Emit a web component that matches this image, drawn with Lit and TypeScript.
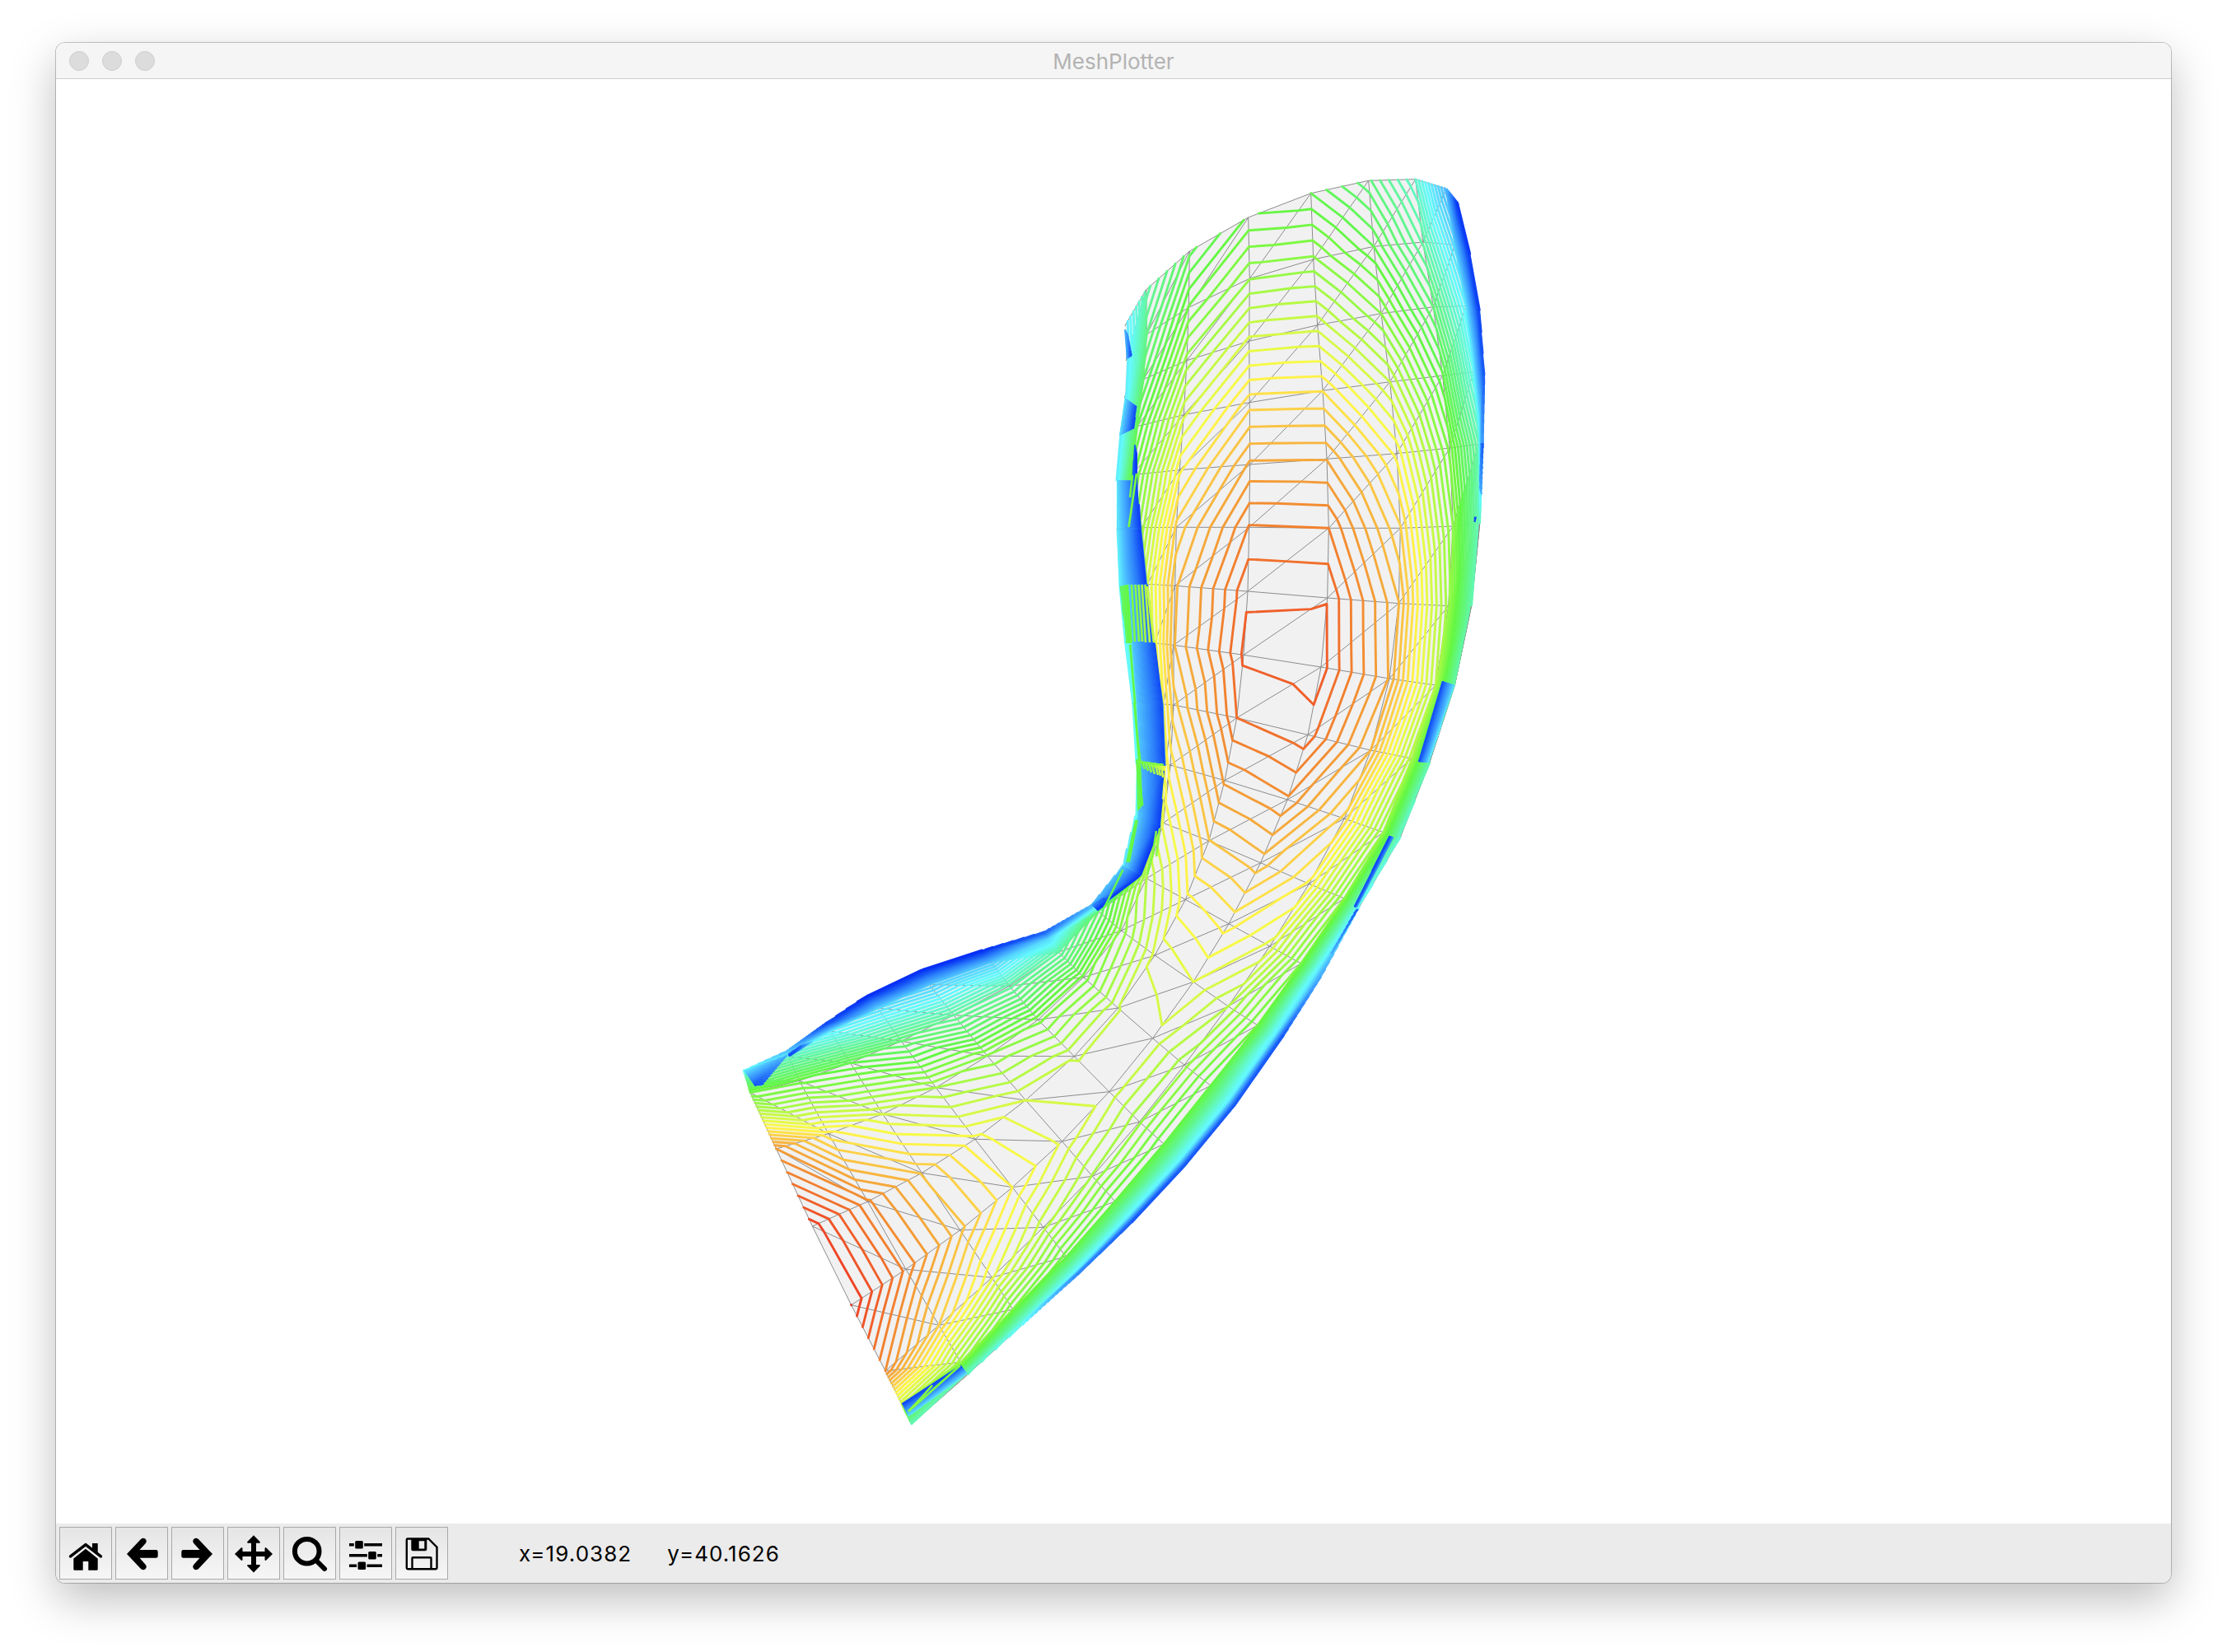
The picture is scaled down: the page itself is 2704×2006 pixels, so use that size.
import { LitElement, html, css, svg } from "lit";
import { customElement, property } from "lit/decorators.js";

type V = [number, number, number];

// Mesh vertices: each row is a ring across the tube, [x, y, contour value].
const ROWS: V[][] = [
  [[1365.7,396,39],[1365.7,396,39],[1391.7,351.7,31.5],[1444.3,305,26.3],[1515.7,264,23.8],[1591.7,234.7,25],[1661.7,219.3,28.7],[1718.7,217.7,34],[1756,229.3,43.5],[1770.7,247.7,60]],
  [[1367.3,438,39],[1367.3,438,39],[1392.3,406,29],[1443.3,373.3,22.9],[1517.3,338.3,20.05],[1594.7,315,20.8],[1668,299.3,25],[1727.7,294,31.2],[1766.7,297.3,40.5],[1784.7,308.3,59]],
  [[1365.3,483,39],[1365.3,483,39],[1388.3,460.7,27],[1441,437.7,19.6],[1516.7,414.3,15.7],[1599.7,394.7,16.4],[1677,380.7,21],[1740.3,372.7,28],[1780,371.7,38],[1796.3,376.7,58]],
  [[1359.3,528,39],[1359.3,528,39],[1380.7,517.7,25],[1437.3,503.7,16.2],[1517.3,488.7,11.45],[1606,474.3,12.05],[1687.7,463.7,17],[1751.7,456,24.8],[1789.3,451.7,36],[1802,455,55]],
  [[1356,583,38],[1356,583,38],[1374.3,576.7,23.5],[1432.3,570.7,13.2],[1517.7,564,7.77],[1611,557.3,8.05],[1696,550.7,13.3],[1760.3,544,22.3],[1795.7,539.3,32],[1800.3,537,48]],
  [[1356,643.3,38],[1356,643.3,38],[1386,640.7,19.5],[1428.3,640.3,10.7],[1516.7,640.3,4.9],[1613.3,641.3,5],[1700.3,641.3,10.9],[1764.3,639,21],[1796.7,635,33],[1796.7,635,33]],
  [[1360,713,37],[1360,713,37],[1393.3,709.3,16],[1426.7,711.3,9.2],[1515,718,3.1],[1611.7,726,3.05],[1698.3,732.7,8.95],[1758.7,735.7,19.5],[1786.7,735,32],[1786.7,735,32]],
  [[1365,780,38],[1365,780,38],[1402,781,14.5],[1425,783.3,9.1],[1510,795.3,2.8],[1604,810,2.5],[1687,824,8.1],[1743.3,832,18],[1766.3,832,31.5],[1766.3,832,31.5]],
  [[1374.3,855,38],[1374.3,855,38],[1412.7,855,13],[1425,856,10.4],[1501.7,871.7,4],[1588,892.3,3.4],[1664.3,911,9],[1714,921,18.5],[1735.5,926.7,32],[1735.5,926.7,32]],
  [[1380,926.7,37],[1380,926.7,37],[1415,928,13.5],[1421,929,12.5],[1487.1,947.7,6.8],[1563.2,971,6.15],[1632.3,994,11.3],[1679.7,1010.7,20],[1700,1017,34],[1700,1017,34]],
  [[1378.4,991.7,37],[1378.4,991.7,37],[1409,999,16],[1412.4,999.3,14.8],[1467.8,1021,10.05],[1530.6,1047.7,9.47],[1589.5,1073.3,13.2],[1632.3,1091,21],[1650,1101.7,37],[1650,1101.7,37]],
  [[1363,1051.7,40],[1363,1051.7,40],[1386,1063,20],[1392,1066.7,18],[1439.4,1092.3,13.3],[1492,1121.7,12.6],[1541.8,1149,15.3],[1579.7,1170,22],[1599,1183,39],[1603.3,1186.7,46]],
  [[1325.4,1099.3,44],[1325.4,1099.3,44],[1333.5,1106.7,27],[1361.5,1130,20.6],[1402.2,1160,15.7],[1448.9,1192.3,15],[1491.3,1222,18],[1527,1245,23],[1548,1260,39],[1553.5,1265,56]],
  [[1268.2,1131.7,54],[1271.5,1139,41],[1285.4,1156,31],[1315.7,1186.7,22.6],[1357.5,1224,17.05],[1399.6,1260.7,16.3],[1438,1293.3,19.6],[1470,1318.3,24],[1494,1336.500,38.5],[1500,1341.5,56]],
  [[1192.5,1154,60],[1203.2,1168.3,42],[1225.7,1197.3,31.5],[1260.4,1238.3,22.4],[1304.3,1282.7,17.1],[1346.8,1325.7,16.35],[1383.6,1362.3,19.8],[1413.3,1389.3,24],[1434,1410,38.5],[1439.3,1415,56]],
  [[1117.5,1177.3,61],[1128.2,1195.7,42],[1157.9,1232.7,31],[1198.9,1282.3,20.9],[1245.4,1336,16],[1289.6,1386,15.15],[1326.4,1428.3,19.1],[1354,1459,24],[1370,1479.500,38.5],[1374.3,1484,55]],
  [[1053.9,1207.7,61],[1065.7,1224.3,40],[1094.3,1264.3,28],[1136.4,1320.7,19],[1183.9,1383.3,13.7],[1229.3,1441.7,13],[1266.8,1490.3,17.6],[1294.3,1525.7,23.5],[1307,1545.500,38.5],[1308.5,1547.5,50]],
  [[1002.5,1242.7,57],[1007.5,1252,38],[1032.5,1290.7,25],[1071.8,1352.7,16],[1119.3,1424.3,10.1],[1165.7,1493.7,9.7],[1204.3,1551.3,14.8],[1230,1590,22],[1241,1606.7,35.5],[1242,1608,37]],
  [[956,1276,43],[957.8,1283,33],[970.4,1312.3,23.5],[1006,1376.7,12.6],[1053.6,1459,5.8],[1100,1541.3,5.3],[1140,1609.3,11],[1166.4,1654,19.5],[1174.6,1667.3,32.5],[1175.5,1668.5,33]],
  [[903.2,1300,37],[907,1312,29],[911,1326.7,23],[942.5,1395,7],[986.4,1489,0.4],[1033.6,1584.7,0],[1075,1664.7,6],[1094.6,1704,16.5],[1106.8,1728.7,32],[1107,1729,32]],
];

// Fragments of hidden layers showing through at the fold: a, b, c, d in ring order.
const PATCHES: [V, V, V, V][] = [
  // upper left edge
  [[1366,400,45],[1369,405,48],[1374,432,57],[1368,436,44]],
  [[1367,484,40],[1379.5,493,56],[1377,520,58],[1360,528.5,40]],
  [[1378,540,54],[1380.5,552,60],[1381,600,60],[1375,578,52]],
  [[1357,583.5,40],[1380,583.5,57],[1386,641,59],[1356.5,643,38]],
  [[1356.5,643,38],[1386,641,59],[1393,709.5,59],[1360,713,38]],
  [[1359.5,712,28],[1371,709.5,23],[1376,781,22],[1368,781,26]],
  [[1371,709.5,42],[1393,709.5,55],[1402,781,56],[1376,781,42]],
  [[1375,780,42],[1402,781,57],[1412.7,855,58],[1381,855,42]],
  [[1371,783,25],[1373.5,783,23],[1378.5,855,24],[1377,855,25]],
  [[1381,855,42],[1412.7,855,58],[1415.5,930,58],[1384,926,42]],
  [[1376,852,25],[1379,855,23],[1385,926,24],[1382,926,25]],
  [[1382,926,41],[1413,936,57],[1409,1005,59],[1382,998,42]],
  [[1380,922,25],[1385,922,23],[1387.5,978,24],[1381,985,26]],
  [[1381,994,41],[1408.5,1002,59],[1386,1063,60],[1366,1052,40]],
  [[1378,996,26],[1381,996,24],[1371,1047,24],[1367,1047,26]],
  [[1364,1052,42],[1386,1063,60],[1340,1098,60],[1326,1098,44]],
  [[1340,1090,54],[1346,1094,58],[1333,1106,60],[1326,1099,48]],
  // lower left end
  [[904,1300.5,39],[956,1281.5,45],[925,1318.5,57],[916,1318,56]],
  [[957,1280,52],[972,1270,54],[987,1264.5,40],[958,1283,58]],
  // right edge
  [[1798.5,538,50],[1801,538,56],[1799,600,46],[1796.5,590,46]],
  [[1789.8,628.5,56],[1792.8,628.5,56],[1791.5,634,57],[1789.5,634,57]],
  [[1751,827,57],[1765.5,831.7,39],[1735,926,37],[1722,925,57]],
  [[1687,1015,58],[1691.5,1016.5,47],[1647,1102,44],[1644.5,1101,56]],
  [[1647,1104,56],[1649,1104,54],[1617,1158,44],[1616,1158,46]],
  // bottom end
  [[1095,1704,58],[1166.5,1657.5,58],[1174,1667.5,39],[1103,1720,38]],
];

// Loose strands lying over the patches: polyline and level.
const STRANDS: [number, [number, number][]][] = [
  [22, [[1380,575],[1370.5,640]]],
  [23, [[1375,577],[1372,604]]],
  [22, [[1374,710],[1378,779]]], [21, [[1378.5,710],[1383,779]]], [20, [[1382.5,710],[1387,779]]],
  [19, [[1386.5,710],[1391,780]]], [18, [[1390.5,710],[1396,780]]], [17, [[1393,712],[1401,780]]],
  [23, [[1382,924],[1385,932]]], [22, [[1386,924],[1390,934]]], [21, [[1390,925],[1394,936]]], [20, [[1394,925],[1398,938]]],
  [19, [[1398,926],[1402,940]]], [18, [[1402,926],[1406,941]]], [17, [[1406,927],[1409,942]]], [16, [[1410,927],[1412,944]]],
  [22, [[1383,925],[1413,929]]],
  [25, [[1363.5,1056],[1341,1102]]],
  [22, [[1404,1009],[1400,1035],[1393,1062]]], [21, [[1408,1006],[1404,1040]]],
  [22, [[1103.5,1713],[1112,1706],[1140,1681],[1166,1658]]],
  [21, [[1103,1714],[1118,1698],[1132,1682]]],
];

const STOPS: [number, number, number, number][] = [
  [0,238,58,36],[3,240,95,42],[5,242,128,46],[8,245,168,58],[11,253,208,70],[13.5,255,250,70],[17,198,250,68],
  [20,150,250,68],[24,100,247,66],[30,98,246,145],[37,100,250,253],[43.5,76,188,255],[51,45,128,250],[56,20,82,245],[60,8,48,245],
];

function levelColor(n: number): string {
  const v = Math.max(0, Math.min(60, n));
  let i = 1;
  while (i < STOPS.length - 1 && STOPS[i][0] < v) i++;
  const a = STOPS[i - 1], b = STOPS[i];
  const t = (v - a[0]) / (b[0] - a[0]);
  const c = [1, 2, 3].map((k) => Math.round(a[k] + (b[k] - a[k]) * t));
  return `rgb(${c.join(",")})`;
}

const f = (n: number) => n.toFixed(1);

function contour(tri: V[], out: Map<number, string[]>) {
  const vs = tri.map((p) => p[2]);
  const lo = Math.ceil(Math.min(...vs)), hi = Math.floor(Math.max(...vs));
  for (let n = lo; n <= hi; n++) {
    const level = n + 0.001;
    const hits: string[] = [];
    for (let i = 0; i < 3; i++) {
      const a = tri[i], b = tri[(i + 1) % 3];
      if (a[2] < level !== b[2] < level) {
        const t = (level - a[2]) / (b[2] - a[2]);
        hits.push(`${f(a[0] + (b[0] - a[0]) * t)} ${f(a[1] + (b[1] - a[1]) * t)}`);
      }
    }
    if (hits.length === 2) {
      if (!out.has(n)) out.set(n, []);
      out.get(n)!.push(`M${hits[0]}L${hits[1]}`);
    }
  }
}

function paths(levels: Map<number, string[]>) {
  return [...levels.entries()]
    .sort((a, b) => a[0] - b[0])
    .map(([n, d]) => svg`<path d=${d.join("")} stroke=${levelColor(n)}></path>`);
}

@customElement("mesh-canvas")
class MeshCanvas extends LitElement {
  static styles = css`
    :host { display: block; }
    .plot { display: block; width: 100%; height: 100%; }
    .face { fill: #f1f1f1; }
    .wire { fill: none; stroke: #8c8c8c; stroke-width: 1; }
    .lines { fill: none; stroke-width: 2.9; stroke-linecap: round; }
    .patch { fill: none; stroke-width: 2; stroke-linecap: butt; }
    .strand { fill: none; stroke-width: 2.6; }
  `;

  render() {
    const main = new Map<number, string[]>();
    let wire = "", face = "";
    const seg = (a: V, b: V) => `M${f(a[0])} ${f(a[1])}L${f(b[0])} ${f(b[1])}`;
    ROWS.forEach((row, r) => {
      row.forEach((p, c) => {
        if (c + 1 < row.length) wire += seg(p, row[c + 1]);
        const next = ROWS[r + 1];
        if (!next) return;
        if (c > 1) wire += seg(p, next[c]);
        if (c + 1 < row.length) {
          const q = row[c + 1], s = next[c], t = next[c + 1];
          if (c > 0) wire += seg(q, s);
          face += `M${p[0]} ${p[1]}L${q[0]} ${q[1]}L${t[0]} ${t[1]}L${s[0]} ${s[1]}Z`;
          contour([p, q, s], main);
          contour([q, t, s], main);
        }
      });
    });
    const patches = PATCHES.map(([a, b, c, d]) => {
      const m = new Map<number, string[]>();
      contour([a, b, d], m);
      contour([b, c, d], m);
      const mid = (a[2] + b[2] + c[2] + d[2]) / 4;
      return svg`<path d=${`M${a[0]} ${a[1]}L${b[0]} ${b[1]}L${c[0]} ${c[1]}L${d[0]} ${d[1]}Z`} fill=${levelColor(mid)}></path>
        <g class="patch">${paths(m)}</g>`;
    });
    return html`<svg class="plot" viewBox="68 96 2568 1754">
      <path class="face" d=${face}></path>
      <path class="wire" d=${wire}></path>
      <g class="lines">${paths(main)}</g>
      ${patches}
      <g class="strand">${STRANDS.map(([n, pts]) => svg`<path d=${"M" + pts.map((p) => p.join(" ")).join("L")} stroke=${levelColor(n)}></path>`)}</g>
    </svg>`;
  }
}

const ICONS: Record<string, unknown> = {
  home: svg`<path d="M13.6 35.8L32 21.6L50.4 35.8" fill="none" stroke="#000" stroke-width="3.6" stroke-linecap="round" stroke-linejoin="round"/>
    <path d="M40 20h6.7v12L40 27zM32 26.8L46.7 38.5V51.5a1.2 1.2 0 0 1-1.2 1.2H35.3V42H28.7V52.7H18.5a1.2 1.2 0 0 1-1.2-1.2V38.5z"/>`,
  back: svg`<path d="M14 33L31 15Q34 12.4 36.5 14.8Q39 17.4 36.6 20.2L29.5 28H49.5Q51.7 28 51.7 30.2V35.6Q51.7 37.8 49.5 37.8H29.5L36.6 45.8Q39 48.6 36.5 51.2Q34 53.6 31 51z"/>`,
  forward: svg`<path d="M50 33L33 15Q30 12.4 27.5 14.8Q25 17.4 27.4 20.2L34.5 28H14.5Q12.3 28 12.3 30.2V35.6Q12.3 37.8 14.5 37.8H34.5L27.4 45.8Q25 48.6 27.5 51.2Q30 53.6 33 51z"/>`,
  pan: svg`<path d="M32 10.3L40 18.5Q40 19.8 38.5 19.8H35V30H45.5V26.5Q45.5 25 46.8 25L55 33L46.8 41Q45.5 41 45.5 39.5V36H35V46H38.5Q40 46 40 47.3L32 55.5L24 47.3Q24 46 25.5 46H29V36H18.5V39.5Q18.5 41 17.2 41L9 33L17.2 25Q18.5 25 18.5 26.5V30H29V19.8H25.5Q24 19.8 24 18.5z"/>`,
  zoom: svg`<circle cx="28.7" cy="29.7" r="14.8" fill="none" stroke="#000" stroke-width="6"/><path d="M39.5 40.5L50 51" stroke="#000" stroke-width="6" stroke-linecap="round"/>`,
  sliders: svg`<path d="M12 21.7H17.8M30.2 21.7H52M12 34.7H33.8M46.2 34.7H52M12 47.3H21.1M33.5 47.3H52" stroke="#000" stroke-width="3.4"/>
    <rect x="19.2" y="16.9" width="9.6" height="9.6" rx="1.5"/><rect x="35.2" y="29.9" width="9.6" height="9.6" rx="1.5"/><rect x="22.5" y="42.5" width="9.6" height="9.6" rx="1.5"/>`,
  save: svg`<path d="M15 14.5H40.3L50.5 24.7V49.5Q50.5 51.2 48.8 51.2H15.5Q13.8 51.2 13.8 49.5V15.7Q13.8 14.5 15 14.5zM20.5 51V38Q20.5 37.3 21.2 37.3H42.8Q43.5 37.3 43.5 38V51" fill="none" stroke="#000" stroke-width="2.4"/>
    <path fill-rule="evenodd" d="M19.3 14H38.3V27.3Q38.3 29.3 36.3 29.3H21.3Q19.3 29.3 19.3 27.3zM28.7 17.2V26.6H35.3V17.2z"/>`,
};

@customElement("tool-button")
class ToolButton extends LitElement {
  @property() icon = "home";
  static styles = css`
    :host { display: block; }
    .button {
      display: block; box-sizing: border-box; width: 64px; height: 64px; padding: 0;
      border: 1px solid #a9a9a9; background: linear-gradient(#e5e5e5, #f6f6f6);
    }
    .glyph { display: block; width: 64px; height: 64px; margin: -1px; }
  `;
  render() {
    return html`<button class="button"><svg class="glyph" viewBox="0 0 64 64">${ICONS[this.icon]}</svg></button>`;
  }
}

@customElement("app-root")
class AppRoot extends LitElement {
  static styles = css`
    :host {
      display: block; box-sizing: border-box; width: 2704px; height: 2006px; padding: 52px 68px 84px;
      background: #fff; overflow: hidden; font-family: Inter, "Liberation Sans", sans-serif;
    }
    .window {
      display: flex; flex-direction: column; height: 1870px; border-radius: 11px; overflow: hidden; background: #fff;
      box-shadow: 0 0 0 1px rgba(0, 0, 0, 0.22), 0 20px 54px rgba(0, 0, 0, 0.26);
    }
    .titlebar {
      display: grid; grid-template-columns: 1fr auto 1fr; align-items: center; box-sizing: border-box;
      height: 44px; padding: 0 16px; background: #f5f5f5; border-bottom: 1px solid #cfcfcf;
    }
    .lights { display: flex; gap: 16px; }
    .light { box-sizing: border-box; width: 24px; height: 24px; border-radius: 50%; background: #dcdcdc; border: 1px solid #cdcdcd; }
    .title { padding-top: 2px; font-size: 26px; line-height: 40px; color: #b3b3b3; }
    .canvas { flex: 1; min-height: 0; }
    .toolbar { display: flex; align-items: center; gap: 4px; height: 72px; padding-left: 4px; background: #ebebeb; }
    .coords {
      display: flex; gap: 43px; margin-left: 82px; padding-top: 2px;
      font-size: 26px; line-height: 32px; letter-spacing: 1.05px; color: #000; white-space: pre;
    }
  `;
  render() {
    return html`<div class="window">
      <div class="titlebar">
        <div class="lights"><span class="light"></span><span class="light"></span><span class="light"></span></div>
        <div class="title">MeshPlotter</div>
      </div>
      <mesh-canvas class="canvas"></mesh-canvas>
      <div class="toolbar">
        ${["home", "back", "forward", "pan", "zoom", "sliders", "save"].map((i) => html`<tool-button icon=${i}></tool-button>`)}
        <div class="coords"><span>x=19.0382</span><span>y=40.1626</span></div>
      </div>
    </div>`;
  }
}
